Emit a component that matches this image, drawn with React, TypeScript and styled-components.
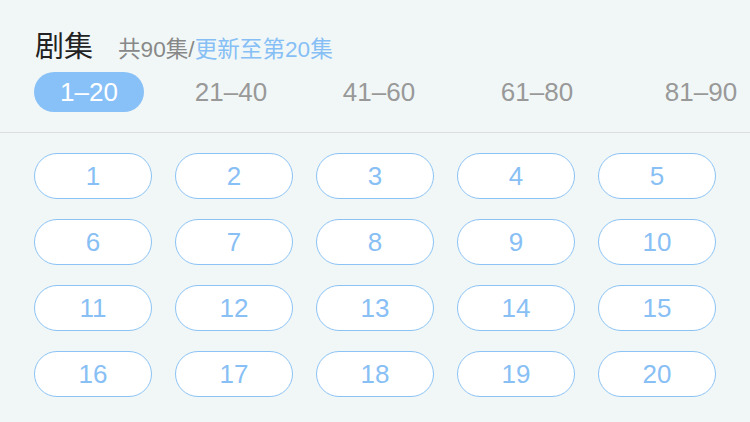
import React from "react";
import styled, { createGlobalStyle } from "styled-components";

const Global = createGlobalStyle`
  html, body { margin: 0; padding: 0; }
  body { background: #f1f7f7; font-family: "Liberation Sans", "Noto Sans CJK SC", sans-serif; }
`;

const Page = styled.div`
  width: 750px;
  height: 422px;
  background: #f1f7f7;
  overflow: hidden;
`;

const Header = styled.div`
  padding: 27px 0 0 35px;
  display: flex;
  align-items: baseline;
  gap: 25px;
`;

const Title = styled.span`
  font-size: 29px;
  line-height: 34px;
  color: #222;
  font-family: "Noto Sans CJK SC", sans-serif;
`;

const Sub = styled.span`
  font-size: 22.6px;
  color: #888;
`;

const SubBlue = styled.span`
  color: #86bff5;
`;

const Tabs = styled.div`
  display: flex;
  align-items: center;
  padding: 8px 0 0 34px;
  height: 40px;
  white-space: nowrap;
`;

const Tab = styled.div<{ $active?: boolean; $offset: number }>`
  box-sizing: border-box;
  height: 40px;
  width: 110px;
  flex: none;
  margin-left: ${(p) => p.$offset}px;
  border-radius: 20px;
  display: flex;
  align-items: center;
  justify-content: center;
  font-size: 26px;
  color: ${(p) => (p.$active ? "#fff" : "#999")};
  background: ${(p) => (p.$active ? "#88c1f7" : "transparent")};
`;

const Divider = styled.div`
  margin-top: 20px;
  height: 1px;
  background: #dcdedf;
`;

const Grid = styled.div`
  display: grid;
  grid-template-columns: repeat(5, 118px);
  column-gap: 23px;
  row-gap: 20px;
  padding: 20px 0 0 34px;
`;

const Ep = styled.div`
  box-sizing: border-box;
  height: 46px;
  border: 1px solid #8cc3f5;
  border-radius: 23px;
  background: #fff;
  display: flex;
  align-items: center;
  justify-content: center;
  font-size: 26px;
  color: #88c0f5;
`;

const tabs = [
  { label: "1–20", offset: 0 },
  { label: "21–40", offset: 32 },
  { label: "41–60", offset: 38 },
  { label: "61–80", offset: 48 },
  { label: "81–90", offset: 54 },
];

export default function App() {
  return (
    <Page>
      <Global />
      <Header>
        <Title>剧集</Title>
        <Sub>
          共90集/<SubBlue>更新至第20集</SubBlue>
        </Sub>
      </Header>
      <Tabs>
        {tabs.map((t, i) => (
          <Tab key={t.label} $active={i === 0} $offset={t.offset}>
            {t.label}
          </Tab>
        ))}
      </Tabs>
      <Divider />
      <Grid>
        {Array.from({ length: 20 }, (_, i) => (
          <Ep key={i}>{i + 1}</Ep>
        ))}
      </Grid>
    </Page>
  );
}
